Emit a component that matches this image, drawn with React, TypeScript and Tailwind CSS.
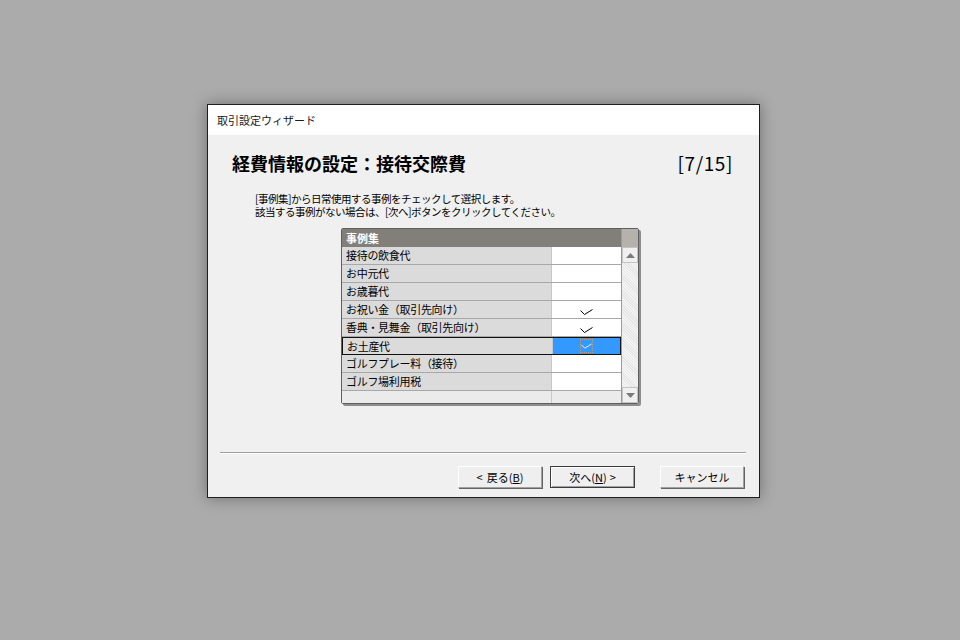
import React from "react";

const ROWS = [
  { name: "接待の飲食代", checked: false },
  { name: "お中元代", checked: false },
  { name: "お歳暮代", checked: false },
  { name: "お祝い金（取引先向け）", checked: true },
  { name: "香典・見舞金（取引先向け）", checked: true },
  { name: "お土産代", checked: true, selected: true },
  { name: "ゴルフプレー料（接待）", checked: false },
  { name: "ゴルフ場利用税", checked: false },
];

const FONT = "font-['MS_UI_Gothic','Noto_Sans_CJK_JP',sans-serif]";

function Check({ color }: { color: string }) {
  return (
    <svg width="13" height="7" viewBox="0 0 13 7" className="block">
      <polyline points="0.5,1.5 4.5,5.5 12.5,0.5" fill="none" stroke={color} strokeWidth="1" />
    </svg>
  );
}

function Arrow({ up }: { up?: boolean }) {
  return (
    <svg width="9" height="5" viewBox="0 0 9 5">
      <polygon points={up ? "0,5 9,5 4.5,0" : "0,0 9,0 4.5,5"} fill="#7a7a7a" />
    </svg>
  );
}

function Button({ label, primary }: { label: React.ReactNode; primary?: boolean }) {
  return (
    <div
      className={`flex h-[22px] items-center justify-center bg-[#efefef] text-[11px] text-black ${
        primary
          ? "w-[85px] border border-[#3c3c3c] shadow-[inset_1px_1px_0_#ffffff,inset_-1px_-1px_0_#a0a0a0]"
          : "w-[84px] border border-[#a0a0a0] border-l-white border-t-white shadow-[1px_1px_0_#646464]"
      }`}
    >
      {label}
    </div>
  );
}

export default function App() {
  return (
    <div className={`h-[640px] w-[960px] bg-[#ababab] pl-[207px] pt-[104px] ${FONT}`}>
      <div className="flex h-[394px] w-[553px] flex-col border border-[#1e1e1e] bg-[#f0f0f0] shadow-[0_0_14px_rgba(0,0,0,0.35)]">
        {/* Title bar */}
        <div className="flex h-[30px] items-center bg-white pl-[9px] text-[11px] text-[#1a1a1a]">
          取引設定ウィザード
        </div>

        {/* Heading */}
        <div className="mt-[16px] flex h-[24px] items-center justify-between pl-[24px] pr-[26px]">
          <span className="text-[18px] font-bold text-black">経費情報の設定：接待交際費</span>
          <span className="text-[19px] tracking-[0.6px] text-black">[7/15]</span>
        </div>

        {/* Instructions */}
        <div className="mt-[17px] pl-[47px] text-[10.5px] leading-[13px] tracking-[-0.5px] text-black">
          <p>[事例集]から日常使用する事例をチェックして選択します。</p>
          <p>該当する事例がない場合は、[次へ]ボタンをクリックしてください。</p>
        </div>

        {/* Grid */}
        <div className="ml-[133px] mt-[10px] flex h-[176px] w-[298px] overflow-hidden rounded-[2px] border border-[#5f5f5f] shadow-[2px_2px_0_#8e8e8e]">
          <div className="flex flex-1 flex-col">
            <div className="flex h-[18px] items-center bg-[#827f7a] pl-[4px] text-[11px] font-bold text-white">
              事例集
            </div>
            {ROWS.map((r) => (
              <div
                key={r.name}
                className={`flex h-[18px] text-[11px] ${
                  r.selected ? "border border-[#111111]" : "border-b border-[#a8a8a8]"
                }`}
              >
                <div className="flex w-[210px] items-center border-r border-[#c8c8c8] bg-[#dcdbdb] pl-[4px] tracking-[-0.3px] text-black">
                  {r.name}
                </div>
                <div
                  className={`flex flex-1 items-center justify-center ${r.selected ? "bg-[#3399ff]" : "bg-white"}`}
                >
                  {r.checked &&
                    (r.selected ? (
                      <div className="flex h-[14px] w-[13px] items-end justify-center border border-dotted border-[#e8913f] pb-[2px]">
                        <Check color="#ffffff" />
                      </div>
                    ) : (
                      <div className="mt-[5px]">
                        <Check color="#000000" />
                      </div>
                    ))}
                </div>
              </div>
            ))}
            <div className="flex flex-1">
              <div className="w-[210px] border-r border-[#c8c8c8] bg-[#ebebeb]" />
              <div className="flex-1 bg-[#ebebeb]" />
            </div>
          </div>

          {/* Scrollbar */}
          <div className="flex w-[17px] flex-col border-l border-[#9a9a9a]">
            <div className="h-[18px] bg-[#b5b2ad]" />
            <div className="flex h-[16px] items-center justify-center border border-[#c4c4c4] bg-[#f0f0f0]">
              <Arrow up />
            </div>
            <div className="flex-1 bg-[repeating-linear-gradient(45deg,#f4f4f4_0px,#f4f4f4_1px,#e6e6e6_1px,#e6e6e6_2px)]" />
            <div className="flex h-[16px] items-center justify-center border border-[#c4c4c4] bg-[#f0f0f0]">
              <Arrow />
            </div>
          </div>
        </div>

        {/* Separator */}
        <div className="ml-[12px] mt-[48px] w-[526px] border-b border-t border-b-white border-t-[#a0a0a0]" />

        {/* Buttons */}
        <div className="mt-[12px] flex pl-[250px]">
          <Button
            label={
              <span>
                <span className="mr-[4px]">&lt;</span>戻る(<span className="underline">B</span>)
              </span>
            }
          />
          <div className="ml-[8px]">
            <Button
              primary
              label={
                <span>
                  次へ(<span className="underline">N</span>)<span className="ml-[3px]">&gt;</span>
                </span>
              }
            />
          </div>
          <div className="ml-[25px]">
            <Button label="キャンセル" />
          </div>
        </div>
      </div>
    </div>
  );
}
